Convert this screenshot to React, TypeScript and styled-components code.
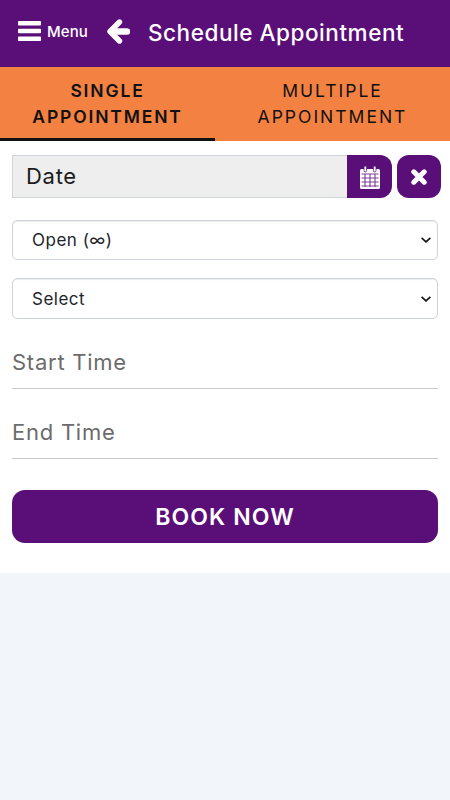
import React from "react";
import styled, { createGlobalStyle } from "styled-components";

const FONT = `Inter, "Open Sans", "Liberation Sans", sans-serif`;
const CHEVRON = `url("data:image/svg+xml,%3Csvg xmlns='http://www.w3.org/2000/svg' width='10' height='6' viewBox='0 0 10 6'%3E%3Cpath d='M.6.8 5 4.8 9.4.8' fill='none' stroke='%23111' stroke-width='1.6'/%3E%3C/svg%3E")`;

const Global = createGlobalStyle`
  html, body { margin: 0; padding: 0; background: #f2f5fa; }
  * { box-sizing: border-box; }
  body { font-family: ${FONT}; }
`;

const Header = styled.header`
  height: 67px;
  background: #5a0f78;
  color: #fff;
  display: flex;
  align-items: center;
  padding: 0 0 5px 18px;
`;
const MenuButton = styled.div`
  display: flex;
  align-items: center;
  gap: 6px;
  width: 89px;
  font-size: 15px;
  font-weight: 500;
  letter-spacing: 0.1px;
`;
const BackIcon = styled.div`
  display: flex;
  margin-right: 18px;
`;
const Title = styled.h1`
  margin: 0;
  padding-top: 2px;
  font-size: 22.5px;
  font-weight: 500;
  letter-spacing: 0.55px;
  white-space: nowrap;
`;
const Tabs = styled.nav`
  display: flex;
  height: 74px;
  background: #f38242;
`;
const Tab = styled.div<{ $active?: boolean; $width: number }>`
  width: ${(p) => p.$width}px;
  text-align: center;
  padding-top: 11px;
  font-size: 17.5px;
  line-height: 26px;
  letter-spacing: ${(p) => (p.$active ? 1.85 : 2)}px;
  color: #111;
  font-weight: ${(p) => (p.$active ? 600 : 400)};
  border-bottom: 3px solid ${(p) => (p.$active ? "#111" : "transparent")};
`;
const Panel = styled.main`
  background: #fff;
  height: 432px;
  padding: 14px 12px 0;
`;
const DateRow = styled.div`
  display: flex;
  height: 43px;
  margin-right: -3px;
`;
const DateField = styled.div`
  flex: 1;
  display: flex;
  align-items: center;
  padding: 0 0 2px 13px;
  background: #eeeeee;
  border: 1px solid #ced4da;
  border-right: 0;
  font-size: 22px;
  letter-spacing: 0.7px;
  color: #1c1c1c;
`;
const CalendarButton = styled.div`
  width: 45px;
  background: #5a0f78;
  border-radius: 0 12px 12px 0;
  display: flex;
  align-items: center;
  justify-content: center;
  padding-top: 1px;
`;
const ClearButton = styled.div`
  width: 44px;
  margin-left: 5px;
  background: #5a0f78;
  border-radius: 12px;
  display: flex;
  align-items: center;
  justify-content: center;
`;
const Select = styled.select<{ $top: number; $height: number }>`
  display: block;
  width: 100%;
  height: ${(p) => p.$height}px;
  margin-top: ${(p) => p.$top}px;
  padding: 0 0 0 19px;
  appearance: none;
  background: #fff ${CHEVRON} no-repeat right 6px center;
  border: 1px solid #ced4da;
  border-radius: 5px;
  box-shadow: inset 0 1px 1px rgba(0, 0, 0, 0.08);
  font-family: ${FONT};
  font-size: 17px;
  letter-spacing: 0.5px;
  color: #212529;
`;
const LineField = styled.div<{ $top: number }>`
  height: 42px;
  margin-top: ${(p) => p.$top}px;
  border-bottom: 1px solid #c8c8c8;
  color: #6c6c6c;
  font-size: 22px;
  letter-spacing: 0.75px;
  line-height: 30px;
`;
const BookButton = styled.div`
  height: 53px;
  margin-top: 31px;
  background: #5a0f78;
  color: #fff;
  border-radius: 13px;
  display: flex;
  align-items: center;
  justify-content: center;
  font-size: 23px;
  font-weight: 600;
  letter-spacing: 1.1px;
`;

const BarsIcon = () => (
  <svg width="23" height="20" viewBox="0 0 23 20" fill="#fff">
    <rect y="0" width="23" height="4.6" rx="0.8" />
    <rect y="7.7" width="23" height="4.6" rx="0.8" />
    <rect y="15.4" width="23" height="4.6" rx="0.8" />
  </svg>
);

const ArrowIcon = () => (
  <svg width="23" height="25" viewBox="0 0 23 25" fill="none" stroke="#fff" strokeLinecap="round" strokeLinejoin="round">
    <path d="M12.5 3 3 12.5l9.5 9.5" strokeWidth="5.4" />
    <path d="M5 12.5h15" strokeWidth="6.6" />
  </svg>
);

const CalendarIcon = () => (
  <svg width="20" height="23" viewBox="0 0 20 23">
    <path fill="#fff" d="M1.5 3H18.5A1.5 1.5 0 0 1 20 4.5V21.5A1.5 1.5 0 0 1 18.5 23H1.5A1.5 1.5 0 0 1 0 21.5V4.5A1.5 1.5 0 0 1 1.5 3Z" />
    <rect x="4" y="0" width="2.6" height="6" rx="1.3" fill="#fff" stroke="#5a0f78" strokeWidth="0.8" />
    <rect x="13.4" y="0" width="2.6" height="6" rx="1.3" fill="#fff" stroke="#5a0f78" strokeWidth="0.8" />
    <path
      d="M1.5 8h17M1.5 12h17M1.5 16h17M1.5 20h17M5 8v13M10 8v13M15 8v13"
      stroke="#5a0f78"
      strokeWidth="1.1"
      fill="none"
      opacity="0.8"
    />
  </svg>
);

const CrossIcon = () => (
  <svg width="16" height="16" viewBox="0 0 16 16" fill="none" stroke="#fff" strokeWidth="5" strokeLinecap="round">
    <path d="M2.8 2.8l10.4 10.4M13.2 2.8 2.8 13.2" />
  </svg>
);

export default function App() {
  return (
    <>
      <Global />
      <Header>
        <MenuButton><BarsIcon /> Menu</MenuButton>
        <BackIcon><ArrowIcon /></BackIcon>
        <Title>Schedule Appointment</Title>
      </Header>
      <Tabs>
        <Tab $active $width={215}>SINGLE<br />APPOINTMENT</Tab>
        <Tab $width={235}>MULTIPLE<br />APPOINTMENT</Tab>
      </Tabs>
      <Panel>
        <DateRow>
          <DateField>Date</DateField>
          <CalendarButton><CalendarIcon /></CalendarButton>
          <ClearButton><CrossIcon /></ClearButton>
        </DateRow>
        <Select $top={22} $height={40} defaultValue="open"><option value="open">Open (∞)</option></Select>
        <Select $top={18} $height={41} defaultValue="select"><option value="select">Select</option></Select>
        <LineField $top={28}>Start Time</LineField>
        <LineField $top={28}>End Time</LineField>
        <BookButton>BOOK NOW</BookButton>
      </Panel>
    </>
  );
}
